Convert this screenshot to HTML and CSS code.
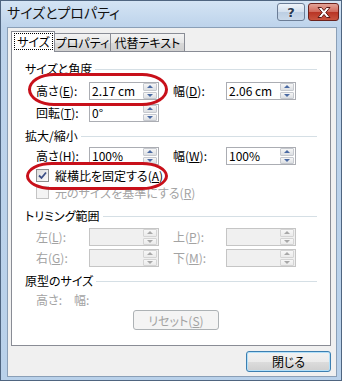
FILE: index.html
```html
<!DOCTYPE html>
<html>

<head>
    <meta charset="UTF-8">
    <title>サイズとプロパティ</title>
    <link rel="stylesheet" href="styles.css">
</head>

<body>
    <div class="stage">
        <div class="window">
            <div class="titlebar">
                <span class="title">サイズとプロパティ</span>
                <div class="caption">
                    <span class="cap-btn help">?</span>
                    <span class="cap-btn close">
                        <svg width="14" height="11" viewBox="0 0 14 11">
                            <path d="M1 0.5h3.5L7 3.5 9.5 0.5H13L8.8 5.5 13 10.5H9.5L7 7.5 4.5 10.5H1L5.2 5.5Z"
                                fill="#fff" stroke="#5a1a16" stroke-width="1" stroke-linejoin="round" />
                        </svg>
                    </span>
                </div>
            </div>

            <div class="client">
                <div class="tabs">
                    <div class="tab active"><span>サイズ</span></div>
                    <div class="tab">プロパティ</div>
                    <div class="tab">代替テキスト</div>
                </div>

                <div class="panel">
                    <div class="group-title">サイズと角度</div>
                    <div class="rows first">
                        <label>高さ(<u>E</u>):</label>
                        <div class="cell"><div class="spin"><span class="val">2.17 cm</span><span class="spin-btns"><i class="up"></i><i class="down"></i></span></div></div>
                        <label>幅(<u>D</u>):</label>
                        <div class="cell"><div class="spin"><span class="val">2.06 cm</span><span class="spin-btns"><i class="up"></i><i class="down"></i></span></div></div>
                        <label>回転(<u>T</u>):</label>
                        <div class="cell"><div class="spin"><span class="val">0°</span><span class="spin-btns"><i class="up"></i><i class="down"></i></span></div></div>
                    </div>

                    <div class="group-title">拡大/縮小</div>
                    <div class="rows scale">
                        <label>高さ(<u>H</u>):</label>
                        <div class="cell"><div class="spin"><span class="val">100%</span><span class="spin-btns"><i class="up"></i><i class="down"></i></span></div></div>
                        <label>幅(<u>W</u>):</label>
                        <div class="cell"><div class="spin"><span class="val">100%</span><span class="spin-btns"><i class="up"></i><i class="down"></i></span></div></div>
                    </div>
                    <div class="check">
                        <span class="box checked">
                            <svg width="9" height="9" viewBox="0 0 9 9">
                                <path d="M1 4.5 3.5 7 8 1.5" fill="none" stroke="#3c4f86" stroke-width="1.8" />
                            </svg>
                        </span>
                        <span>縦横比を固定する(<u>A</u>)</span>
                    </div>
                    <div class="check disabled">
                        <span class="box"></span>
                        <span>元のサイズを基準にする(<u>R</u>)</span>
                    </div>

                    <div class="group-title crop">トリミング範囲</div>
                    <div class="rows crop-rows disabled">
                        <label>左(<u>L</u>):</label>
                        <div class="cell"><div class="spin"><span class="val"></span><span class="spin-btns"><i class="up"></i><i class="down"></i></span></div></div>
                        <label>上(<u>P</u>):</label>
                        <div class="cell"><div class="spin"><span class="val"></span><span class="spin-btns"><i class="up"></i><i class="down"></i></span></div></div>
                        <label>右(<u>G</u>):</label>
                        <div class="cell"><div class="spin"><span class="val"></span><span class="spin-btns"><i class="up"></i><i class="down"></i></span></div></div>
                        <label>下(<u>M</u>):</label>
                        <div class="cell"><div class="spin"><span class="val"></span><span class="spin-btns"><i class="up"></i><i class="down"></i></span></div></div>
                    </div>

                    <div class="group-title orig">原型のサイズ</div>
                    <div class="orig-row">
                        <span>高さ:</span>
                        <span>幅:</span>
                    </div>
                    <div class="reset-row">
                        <span class="btn reset"><span>リセット(<u>S</u>)</span></span>
                    </div>
                </div>

                <div class="footer">
                    <span class="btn default">閉じる</span>
                </div>
            </div>
        </div>

        <div class="mark mark-size"></div>
        <div class="mark mark-ratio"></div>
    </div>
</body>

</html>
```

FILE: styles.css
```css
* {
    box-sizing: border-box;
}

body {
    margin: 0;
    font-family: "Noto Sans CJK JP", "Noto Sans", sans-serif;
    font-size: 12px;
    font-feature-settings: "palt";
    color: #000;
}

.stage {
    position: relative;
    width: 342px;
    height: 381px;
}

.window {
    width: 342px;
    height: 381px;
    border: 1px solid #4f6580;
    background: linear-gradient(#d4e4f4, #bdd3eb 26px, #b9d1ea);
    display: flex;
    flex-direction: column;
}

.titlebar {
    height: 26px;
    display: flex;
    align-items: flex-start;
    padding: 0 2px 0 6px;
}

.title {
    flex: 1;
    font-size: 14px;
    line-height: 22px;
    color: #111;
}

.caption {
    display: flex;
    gap: 3px;
    margin-top: 2px;
}

.cap-btn {
    height: 18px;
    display: flex;
    align-items: center;
    justify-content: center;
    border-radius: 3px;
}

.help {
    width: 28px;
    border: 1px solid #6b7d96;
    background: linear-gradient(#eef4fa, #d3e0ee 50%, #bccee3 51%, #c9d9ea);
    font-family: "DejaVu Sans", sans-serif;
    font-weight: bold;
    font-size: 13px;
    color: #2a3a52;
    text-shadow: 0 0 2px #fff;
}

.close {
    width: 31px;
    border: 1px solid #6b221d;
    background: linear-gradient(#e3a397, #d0685a 50%, #b83424 51%, #c9543f);
}

.client {
    flex: 1;
    margin: 0 4px 3px 6px;
    border: 1px solid #8a9fb7;
    background: #f0f0f0;
    padding: 3px 5px 4px 3px;
    display: flex;
    flex-direction: column;
}

.tabs {
    height: 20px;
    display: flex;
    align-items: flex-end;
}

.tab {
    height: 18px;
    border: 1px solid #898c95;
    border-bottom: none;
    border-left: none;
    background: linear-gradient(#f3f3f3, #e6e6e6 50%, #d9d9d9 51%, #d0d0d0);
    display: flex;
    align-items: center;
    justify-content: center;
    line-height: 16px;
}

.tab:nth-child(2) {
    width: 56px;
}

.tab:nth-child(3) {
    width: 74px;
}

.tab.active {
    width: 44px;
    height: 21px;
    margin-bottom: -1px;
    border-left: 1px solid #898c95;
    background: #fff;
    padding: 1px 1px 2px 2px;
    position: relative;
}

.tab.active span {
    flex: 1;
    align-self: stretch;
    border: 1px dotted #000;
    display: flex;
    align-items: center;
    justify-content: center;
}

.panel {
    flex: 1;
    border: 1px solid #898c95;
    background: #fff;
    padding: 9px 13px 0 13px;
}

.group-title {
    height: 15px;
    line-height: 15px;
    display: flex;
    align-items: center;
    gap: 3px;
}

.group-title::after {
    content: "";
    flex: 1;
    border-top: 1px solid #d5dfe5;
    margin-top: 2px;
}

.rows {
    display: grid;
    grid-template-columns: 53px 84px 53px 70px;
    grid-auto-rows: 18px;
    row-gap: 4px;
    margin-left: 11px;
    align-items: center;
}

.rows.first {
    margin-top: 6px;
    margin-bottom: 6px;
}

.rows.scale {
    margin-top: 4px;
}

.rows.crop-rows {
    margin-top: 5px;
    row-gap: 3px;
    margin-bottom: 6px;
}

.rows label {
    line-height: 18px;
}

.spin {
    width: 70px;
    height: 18px;
    border: 1px solid #abadb3;
    background: #fff;
    display: flex;
    align-items: center;
}

.val {
    flex: 1;
    padding-left: 2px;
    line-height: 16px;
}

.spin-btns {
    width: 14px;
    height: 16px;
    display: flex;
    flex-direction: column;
    margin-right: 1px;
    gap: 1px;
}

.spin-btns i {
    flex: 1;
    border: 1px solid #c6c9cf;
    border-radius: 1px;
    background: linear-gradient(#f6f6f6, #dcdfe3);
    display: flex;
    align-items: center;
    justify-content: center;
}

.spin-btns .up::after {
    content: "";
    border-left: 3px solid transparent;
    border-right: 3px solid transparent;
    border-bottom: 3px solid #4a6aa3;
}

.spin-btns .down::after {
    content: "";
    border-left: 3px solid transparent;
    border-right: 3px solid transparent;
    border-top: 3px solid #4a6aa3;
}

.check {
    height: 15px;
    display: flex;
    align-items: center;
    gap: 6px;
    margin-left: 11px;
    margin-top: 3px;
}

.check.disabled {
    margin-top: 2px;
    color: #a3a3a3;
}

.box {
    width: 13px;
    height: 13px;
    border: 1px solid #8e8f8f;
    background: linear-gradient(135deg, #dcdcdc, #fbfbfb);
    display: flex;
    align-items: center;
    justify-content: center;
}

.check.disabled .box {
    border-color: #c4c4c4;
    background: #f4f4f4;
}

.group-title.crop {
    margin-top: 8px;
}

.disabled label {
    color: #a3a3a3;
}

.disabled .spin {
    background: #f0f0f0;
    border-color: #c5c5c5;
}

.disabled .spin-btns i {
    background: linear-gradient(#f7f7f7, #ebebeb);
    border-color: #d4d4d4;
}

.disabled .spin-btns .up::after {
    border-bottom-color: #a8a8a8;
}

.disabled .spin-btns .down::after {
    border-top-color: #a8a8a8;
}

.orig-row {
    margin: 4px 0 0 11px;
    display: flex;
    gap: 12px;
    color: #a3a3a3;
    line-height: 15px;
}

.reset-row {
    margin: 3px 0 0 108px;
}

.btn {
    display: flex;
    align-items: center;
    justify-content: center;
    border-radius: 3px;
}

.reset {
    width: 86px;
    height: 20px;
    border: 1px solid #adb2b5;
    background: #f4f4f4;
    color: #a3a3a3;
}

.footer {
    padding-top: 5px;
    display: flex;
    justify-content: flex-end;
}

.default {
    width: 85px;
    height: 21px;
    border: 1px solid #3c7fb1;
    background: linear-gradient(#f2f2f2, #ebebeb 50%, #dddddd 51%, #cfcfcf);
    box-shadow: inset 0 0 0 1px #b3e0f9;
}

.mark {
    position: absolute;
    border: 3px solid #c8101a;
    border-radius: 26px / 50%;
}

.mark-size {
    left: 28px;
    top: 73px;
    width: 140px;
    height: 33px;
}

.mark-ratio {
    left: 26px;
    top: 162px;
    width: 142px;
    height: 28px;
}
```
